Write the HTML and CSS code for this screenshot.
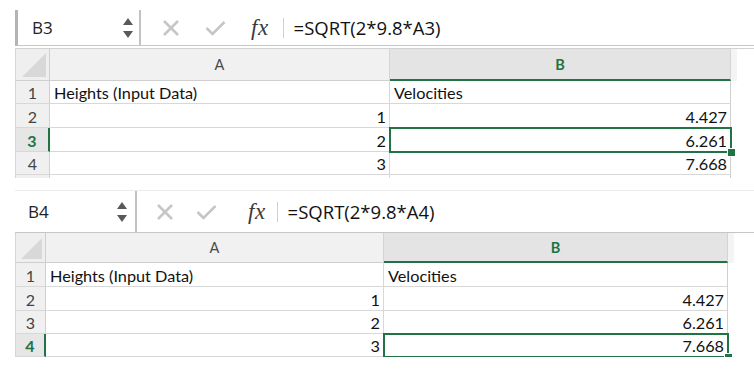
FILE: index.html
```html
<!DOCTYPE html>
<html lang="en">
<head>
    <meta charset="UTF-8">
    <title>Velocities</title>
    <link rel="stylesheet" href="styles.css">
</head>
<body>
    <div class="panel panel-first">
        <div class="fbar">
            <div class="namebox">
                <span class="name">B3</span>
                <span class="spin">
                    <svg width="10" height="7" viewBox="0 0 10 7"><path d="M5 0 L10 7 L0 7 Z" fill="#595959"/></svg>
                    <svg width="10" height="7" viewBox="0 0 10 7"><path d="M0 0 L10 0 L5 7 Z" fill="#595959"/></svg>
                </span>
            </div>
            <div class="fb-icons">
                <svg class="ic-x" width="18" height="18" viewBox="0 0 18 18"><path d="M2 2 L16 16 M16 2 L2 16" stroke="#c6c6c6" stroke-width="2.6" fill="none"/></svg>
                <svg class="ic-ok" width="21" height="16" viewBox="0 0 21 16"><path d="M1.5 8 L7.5 14 L19.5 2" stroke="#c6c6c6" stroke-width="2.6" fill="none"/></svg>
                <span class="fx">fx</span>
                <span class="fb-sep"></span>
            </div>
            <div class="formula">=SQRT(2*9.8*A3)</div>
        </div>
        <div class="sheet">
            <div class="corner"><span class="tri"></span></div>
            <div class="colhead">A</div>
            <div class="colhead colhead-on">B</div>
            <div class="stub stub-head"></div>

            <div class="rowhead">1</div>
            <div class="cell">Heights (Input Data)</div>
            <div class="cell cell-b">Velocities</div>
            <div class="stub"></div>

            <div class="rowhead">2</div>
            <div class="cell num">1</div>
            <div class="cell cell-b num">4.427</div>
            <div class="stub"></div>

            <div class="rowhead rowhead-on">3</div>
            <div class="cell num">2</div>
            <div class="cell cell-b num active">6.261<span class="handle"></span></div>
            <div class="stub"></div>

            <div class="rowhead">4</div>
            <div class="cell num">3</div>
            <div class="cell cell-b num">7.668</div>
            <div class="stub"></div>

            <div class="rowhead tail"></div>
            <div class="cell tail"></div>
            <div class="cell cell-b tail"></div>
            <div class="stub tail"></div>
        </div>
    </div>

    <div class="panel panel-second">
        <div class="fbar">
            <div class="namebox">
                <span class="name">B4</span>
                <span class="spin">
                    <svg width="10" height="7" viewBox="0 0 10 7"><path d="M5 0 L10 7 L0 7 Z" fill="#595959"/></svg>
                    <svg width="10" height="7" viewBox="0 0 10 7"><path d="M0 0 L10 0 L5 7 Z" fill="#595959"/></svg>
                </span>
            </div>
            <div class="fb-icons">
                <svg class="ic-x" width="18" height="18" viewBox="0 0 18 18"><path d="M2 2 L16 16 M16 2 L2 16" stroke="#c6c6c6" stroke-width="2.6" fill="none"/></svg>
                <svg class="ic-ok" width="21" height="16" viewBox="0 0 21 16"><path d="M1.5 8 L7.5 14 L19.5 2" stroke="#c6c6c6" stroke-width="2.6" fill="none"/></svg>
                <span class="fx">fx</span>
                <span class="fb-sep"></span>
            </div>
            <div class="formula">=SQRT(2*9.8*A4)</div>
        </div>
        <div class="sheet">
            <div class="corner"><span class="tri"></span></div>
            <div class="colhead">A</div>
            <div class="colhead colhead-on">B</div>
            <div class="stub stub-head"></div>

            <div class="rowhead">1</div>
            <div class="cell">Heights (Input Data)</div>
            <div class="cell cell-b">Velocities</div>
            <div class="stub"></div>

            <div class="rowhead">2</div>
            <div class="cell num">1</div>
            <div class="cell cell-b num">4.427</div>
            <div class="stub"></div>

            <div class="rowhead">3</div>
            <div class="cell num">2</div>
            <div class="cell cell-b num">6.261</div>
            <div class="stub"></div>

            <div class="rowhead rowhead-on">4</div>
            <div class="cell num">3</div>
            <div class="cell cell-b num active">7.668<span class="handle"></span></div>
            <div class="stub"></div>
        </div>
    </div>
</body>
</html>
```

FILE: styles.css
```css
body {
    margin: 0;
    padding: 0;
    background: #ffffff;
    font-family: Lato, "Open Sans", sans-serif;
    color: #1a1a1a;
}

.panel {
    margin-left: 15px;
}

.panel-first {
    padding-top: 10px;
}

.panel-second {
    margin-top: 12px;
}

/* formula bar */
.fbar {
    display: flex;
    align-items: stretch;
    height: 35px;
    border-bottom: 1px solid #c6c6c6;
    background: #ffffff;
    font-family: "Open Sans", Lato, sans-serif;
}

.panel-first .fbar {
    border-left: 3px solid #b4b4b4;
}

.panel-second .fbar {
    height: 41px;
    border-top: 1px solid #ececec;
}

.namebox {
    display: flex;
    align-items: center;
    justify-content: space-between;
    width: 123px;
    padding-left: 14px;
    padding-right: 6px;
    box-sizing: border-box;
    border-right: 2px solid #c2c2c2;
}

.panel-second .namebox {
    width: 122px;
    padding-left: 13px;
    padding-right: 8px;
}

.name {
    font-size: 17px;
    color: #222;
}

.spin {
    display: flex;
    flex-direction: column;
    gap: 6px;
}

.spin svg {
    display: block;
}

.fb-icons {
    display: flex;
    align-items: center;
    padding-left: 21px;
}

.ic-ok {
    margin-left: 25px;
}

.fx {
    margin-left: 25px;
    font-family: "Liberation Serif", serif;
    font-style: italic;
    font-size: 23px;
    color: #3a3a3a;
    letter-spacing: 0.5px;
}

.fb-sep {
    width: 1px;
    height: 20px;
    margin-left: 14px;
    background: #d0d0d0;
}

.panel-second .fb-icons {
    padding-left: 19px;
}

.panel-second .ic-ok {
    margin-left: 22px;
}

.panel-second .fx {
    margin-left: 31px;
}

.panel-second .fb-sep {
    margin-left: 11px;
}

.formula {
    display: flex;
    align-items: center;
    padding-left: 10px;
    font-size: 18.5px;
    color: #111;
}

/* grid */
.sheet {
    display: grid;
    grid-template-columns: 35px 340px 341px 6px;
    grid-template-rows: 32px 23px 24px 24px 23px 3px;
    margin-top: 2px;
    border-top: 1px solid #d2d2d2;
    font-size: 16.25px;
}

.panel-second .sheet {
    grid-template-columns: 31px 338px 344px 6px;
    grid-template-rows: 30px 24px 24px 23px 23px;
    margin-top: 0;
    border-top: none;
}

.corner {
    position: relative;
    background: #efefef;
    border-right: 1px solid #cfcfcf;
    border-bottom: 1px solid #cfcfcf;
    border-left: 1px solid #d6d6d6;
}

.tri {
    position: absolute;
    right: 3px;
    bottom: 3px;
    width: 0;
    height: 0;
    border-left: 24px solid transparent;
    border-bottom: 24px solid #d8d8d8;
}

.panel-second .tri {
    border-left-width: 21px;
    border-bottom-width: 21px;
}

.colhead {
    display: flex;
    align-items: center;
    justify-content: center;
    background: #f1f1f1;
    border-right: 1px solid #d4d4d4;
    border-bottom: 1px solid #cfcfcf;
    color: #4a4a4a;
    font-size: 14.5px;
}

.colhead-on {
    background: #e4e4e4;
    color: #217346;
    font-weight: 700;
    border-bottom: 2px solid #217346;
}

.stub {
    background: #ffffff;
}

.stub-head {
    background: #f4f4f4;
}

.rowhead {
    display: flex;
    align-items: flex-end;
    justify-content: center;
    padding-bottom: 1px;
    background: #f0f0f0;
    border-left: 1px solid #d6d6d6;
    border-right: 1px solid #cfcfcf;
    border-bottom: 1px solid #d8d8d8;
    color: #444;
    font-size: 16px;
}

.rowhead-on {
    background: #e6e6e6;
    color: #217346;
    font-weight: 700;
    border-right: 2px solid #217346;
}

.cell {
    display: flex;
    align-items: flex-end;
    padding: 0 4px 1px 4px;
    border-right: 1px solid #d8d8d8;
    border-bottom: 1px solid #d8d8d8;
    color: #111;
    white-space: nowrap;
}

.cell-b {
    border-right-color: #cfcfcf;
}

.num {
    justify-content: flex-end;
    padding-right: 3px;
}

.tail {
    border-bottom: none;
}

.active {
    position: relative;
    outline: 2px solid #217346;
    outline-offset: -1px;
}

.handle {
    position: absolute;
    right: -6px;
    bottom: -6px;
    width: 7px;
    height: 7px;
    background: #217346;
    border: 1px solid #ffffff;
}
```
